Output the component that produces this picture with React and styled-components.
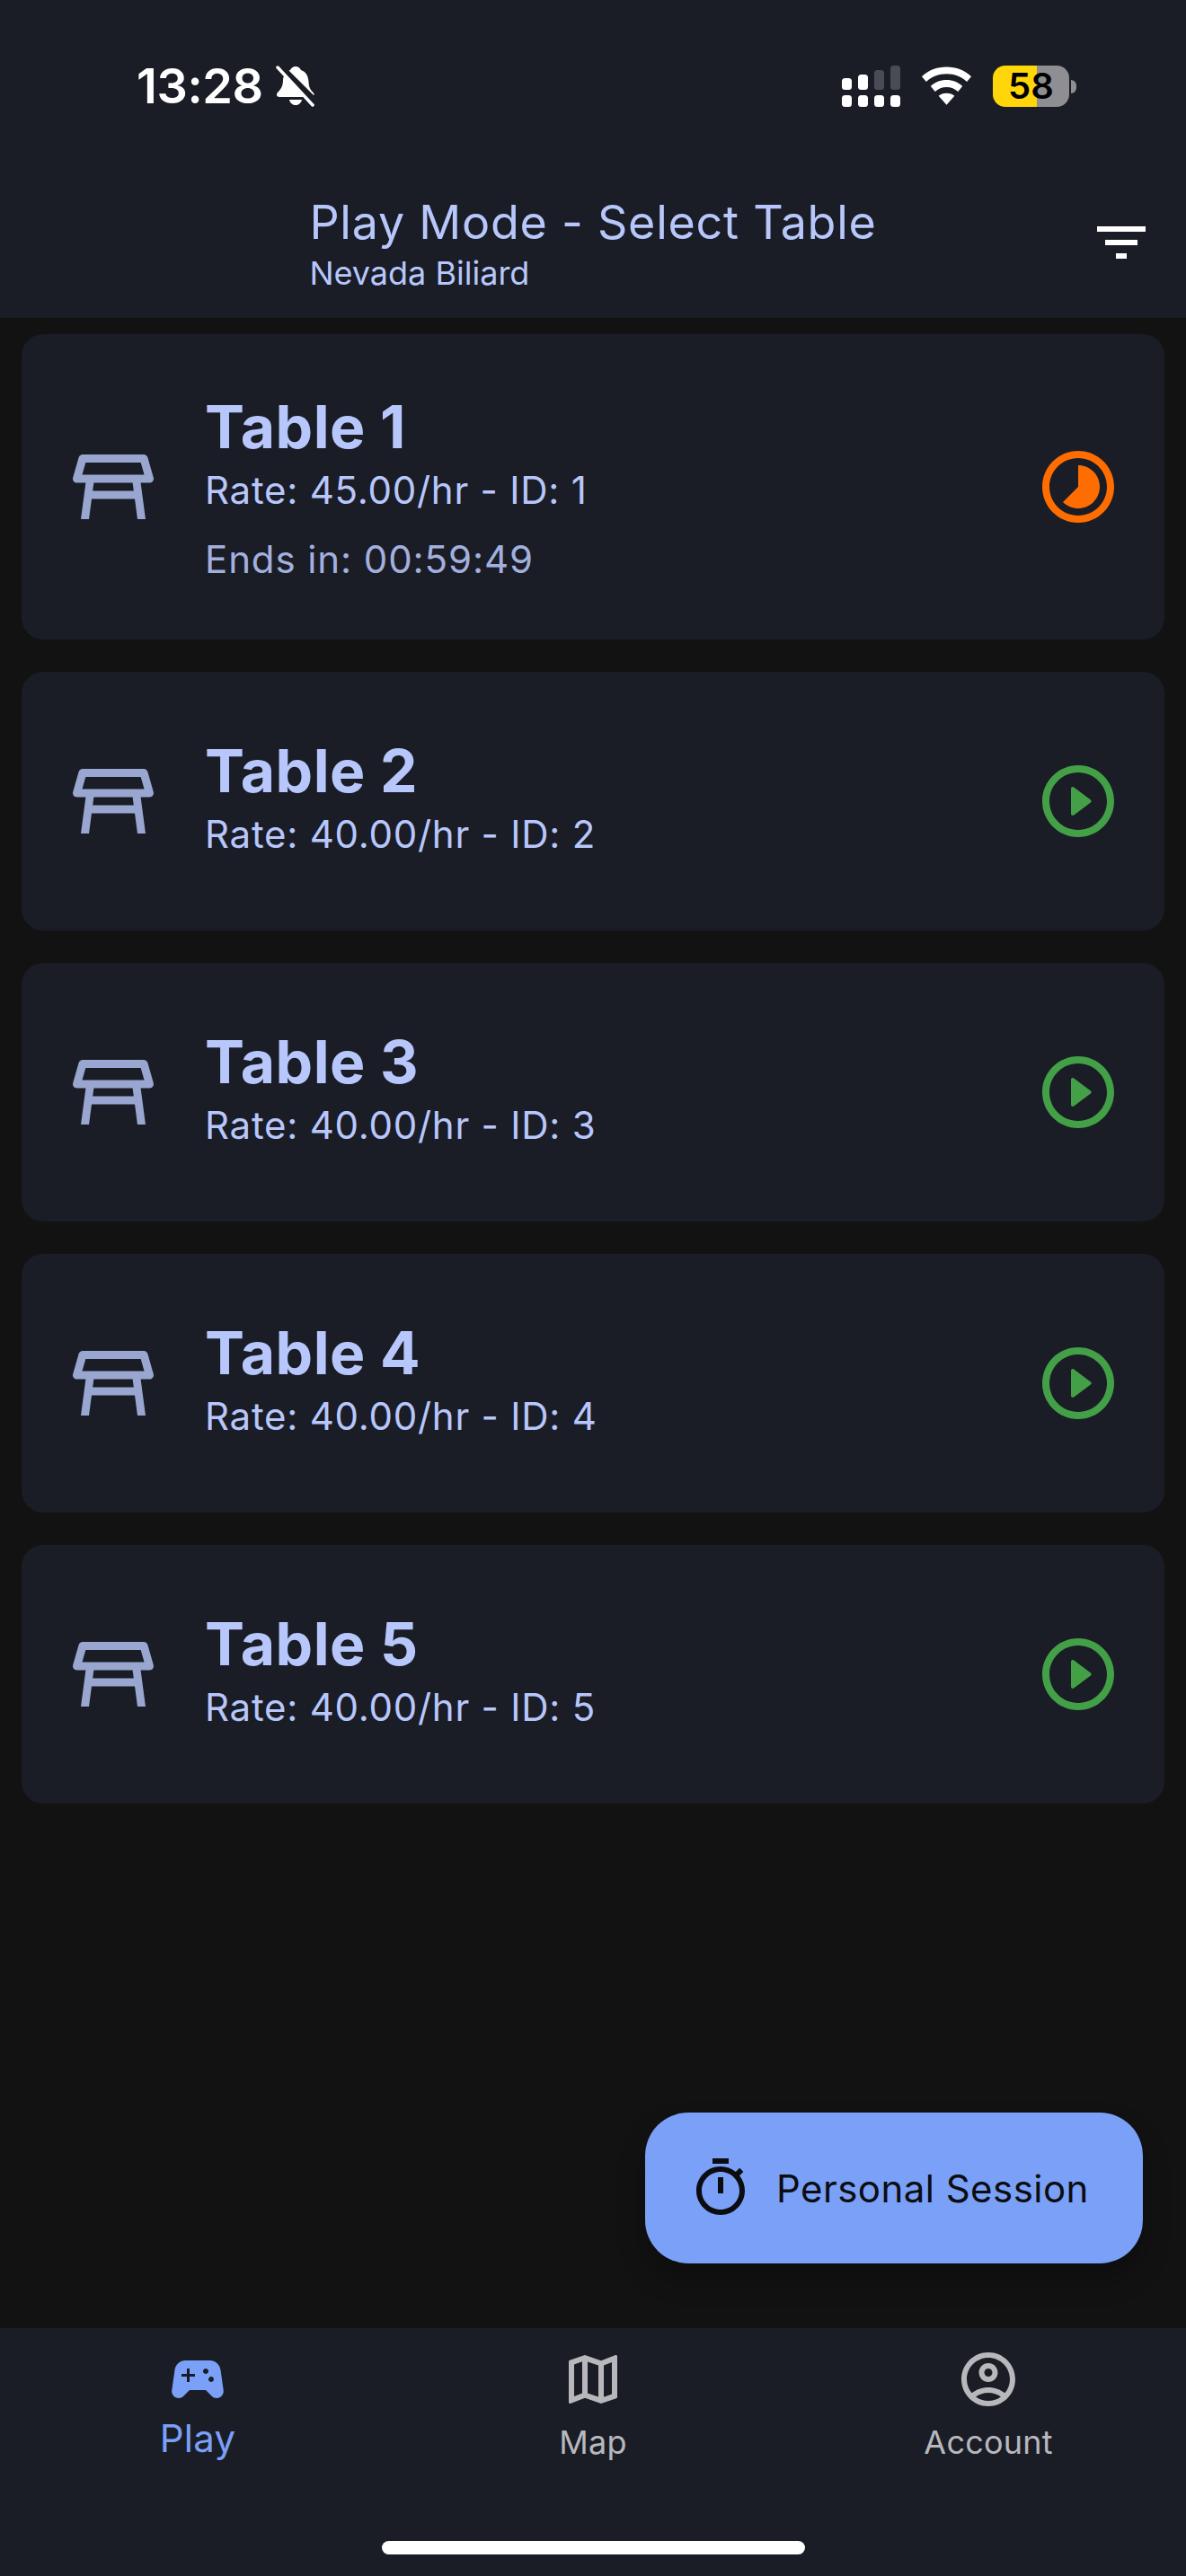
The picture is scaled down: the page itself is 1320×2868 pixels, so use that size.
import React from 'react';
import styled, { createGlobalStyle } from 'styled-components';

const Global = createGlobalStyle`
  html, body { margin: 0; padding: 0; background: #121212; }
  * { box-sizing: border-box; }
`;
const Page = styled.div`
  width: 1320px; height: 2868px; display: flex; flex-direction: column;
  background: #121212; font-family: Inter, "Liberation Sans", sans-serif; overflow: hidden;
`;
const Header = styled.header`
  height: 354px; background: #1a1d26; flex: none; display: flex; flex-direction: column;
`;
const StatusBar = styled.div`
  height: 196px; padding: 73px 122px 0 152px; display: flex; justify-content: space-between; align-items: flex-start;
`;
const TimeGroup = styled.div`
  display: flex; align-items: center; gap: 14px; height: 46px;
`;
const Clock = styled.span`
  color: #fff; font-size: 54px; font-weight: 600; line-height: 46px; letter-spacing: -0.4px;
`;
const StatusIcons = styled.div`
  display: flex; align-items: center; gap: 23px; height: 46px;
`;
const Battery = styled.div`
  width: 85px; height: 46px; border-radius: 14px;
  background: linear-gradient(to right, #ffd60a 0, #ffd60a 49px, #8e8e93 49px);
  display: flex; align-items: center; justify-content: center;
  color: #000; font-size: 40px; font-weight: 600; line-height: 46px;
`;
const BatteryWrap = styled.div`
  display: flex; align-items: center; gap: 2px;
`;
const BatteryNub = styled.div`
  width: 6px; height: 15px; background: #8e8e93; border-radius: 0 7px 7px 0;
`;
const Toolbar = styled.div`
  flex: 1; display: grid; grid-template-columns: 1fr auto 1fr; align-items: start;
`;
const TitleBlock = styled.div`
  grid-column: 2; display: flex; flex-direction: column; margin-top: 17px;
`;
const Title = styled.div`
  color: #b8c7fb; font-size: 52px; line-height: 70px; font-weight: 400; letter-spacing: 0.75px;
`;
const Subtitle = styled.div`
  color: #b8c7fb; font-size: 36px; line-height: 44px; font-weight: 400; margin-top: -1px;
`;
const FilterButton = styled.div`
  grid-column: 3; justify-self: end; display: flex; flex-direction: column; align-items: center; gap: 9px;
  margin: 56px 45px 0 0; width: 54px;
`;
const FilterBar = styled.div`
  height: 6px; background: #fff; width: ${p => p.$w}px;
`;
const Body = styled.main`
  position: relative; flex: 1; padding: 18px 24px 0; display: flex; flex-direction: column; gap: 36px;
`;
const Card = styled.div`
  min-height: 288px; padding: 62.5px 48px; background: #1a1d26; border-radius: 24px;
  display: flex; align-items: center;
`;
const CardText = styled.div`
  flex: 1; display: flex; flex-direction: column; margin-left: 48px; padding-bottom: ${p => p.$compact ? 8 : 0}px;
`;
const CardTitle = styled.div`
  color: #b8c7fb; font-size: 66px; line-height: 80px; font-weight: 700; letter-spacing: 0.5px;
`;
const Rate = styled.div`
  color: #b8c7fb; font-size: 42px; line-height: 61px; letter-spacing: 0.75px;
`;
const Ends = styled.div`
  color: #a3b0de; font-size: 42px; line-height: 54px; margin-top: 20px; letter-spacing: 0.9px;
`;
const Fab = styled.div`
  position: absolute; left: 718px; top: 1998px; width: 554px; height: 168px; border-radius: 48px;
  background: #7aa0f7; box-shadow: 0 18px 30px rgba(0,0,0,.25); padding: 0 48px;
  display: flex; align-items: center; gap: 26px; color: #0c0d10; font-size: 42px; letter-spacing: 0.45px;
`;
const Nav = styled.nav`
  position: relative; height: 276px; flex: none; background: #1a1d26; display: grid; grid-template-columns: repeat(3, 1fr);
`;
const NavItem = styled.div`
  display: flex; flex-direction: column; align-items: center; padding-top: 21px;
  color: ${p => p.$active ? '#7aa0f7' : '#b8b8bc'};
`;
const NavLabel = styled.div`
  font-size: ${p => p.$active ? 42 : 36}px; line-height: ${p => p.$active ? 50 : 44}px;
  letter-spacing: ${p => p.$active ? 0.25 : 0.2}px;
  margin-top: ${p => p.$active ? 5 : 12}px;
`;
const HomeBar = styled.div`
  position: absolute; left: 425px; top: 237px; width: 471px; height: 15px; border-radius: 8px; background: #fff;
`;

const Ico = ({ d, size, color }) => (
  <svg width={size} height={size} viewBox="0 0 24 24" fill={color} style={{ display: 'block', flex: 'none' }}><path d={d} /></svg>
);
const TABLE = 'M21.96 9.73l-1.43-5C20.41 4.3 20.02 4 19.57 4H4.43C3.98 4 3.59 4.3 3.47 4.73l-1.43 5C1.86 10.36 2.34 11 3 11h2.2L4 20h2l.67-5h10.67L18 20h2l-1.2-9H21c.66 0 1.14-.64.96-1.27zM6.93 13l.27-2h9.6l.27 2H6.93zM4.33 9l.86-3h13.63l.86 3H4.33z';
const TIMELAPSE = 'M16.24 7.76C15.07 6.59 13.54 6 12 6v6l-4.24 4.24c2.34 2.34 6.14 2.34 8.49 0 2.34-2.34 2.34-6.14-.01-8.48zM12 2C6.47 2 2 6.47 2 12s4.47 10 10 10 10-4.47 10-10S17.53 2 12 2zm0 18c-4.42 0-8-3.58-8-8s3.58-8 8-8 8 3.58 8 8-3.58 8-8 8z';
const PLAY = 'M10.8 15.9l4.67-3.5c.27-.2.27-.6 0-.8L10.8 8.1c-.33-.25-.8-.01-.8.4v7c0 .41.47.65.8.4zM12 2C6.48 2 2 6.48 2 12s4.48 10 10 10 10-4.48 10-10S17.52 2 12 2zm0 18c-4.41 0-8-3.59-8-8s3.59-8 8-8 8 3.59 8 8-3.59 8-8 8z';
const TIMER = 'M15 1H9v2h6V1zm-4 13h2V8h-2v6zm8.03-6.61l1.42-1.42c-.43-.51-.9-.99-1.41-1.41l-1.42 1.42C16.07 4.74 14.12 4 12 4c-4.97 0-9 4.03-9 9s4.02 9 9 9 9-4.03 9-9c0-2.12-.74-4.07-1.97-5.61zM12 20c-3.87 0-7-3.13-7-7s3.13-7 7-7 7 3.13 7 7-3.13 7-7 7z';
const GAME = 'M21.58 16.09l-1.09-7.66C20.21 6.46 18.52 5 16.53 5H7.47C5.48 5 3.79 6.46 3.51 8.43l-1.09 7.66C2.2 17.63 3.39 19 4.94 19c.68 0 1.32-.27 1.8-.75L9 16h6l2.25 2.25c.48.48 1.13.75 1.8.75 1.56 0 2.75-1.37 2.53-2.91zM11 11H9v2H8v-2H6v-1h2V8h1v2h2v1zm4-1c-.55 0-1-.45-1-1s.45-1 1-1 1 .45 1 1-.45 1-1 1zm2 3c-.55 0-1-.45-1-1s.45-1 1-1 1 .45 1 1-.45 1-1 1z';
const MAP = 'M20.5 3l-.16.03L15 5.1 9 3 3.36 4.9c-.21.07-.36.25-.36.48V20.5c0 .28.22.5.5.5l.16-.03L9 18.9l6 2.1 5.64-1.9c.21-.07.36-.25.36-.48V3.5c0-.28-.22-.5-.5-.5zM10 5.47l4 1.4v11.66l-4-1.4V5.47zm-5 .99l3-1.01v11.7l-3 1.16V6.46zm14 11.08l-3 1.01V6.86l3-1.16v11.84z';
const ACCOUNT = 'M12 2C6.48 2 2 6.48 2 12s4.48 10 10 10 10-4.48 10-10S17.52 2 12 2zM7.35 18.5C8.66 17.56 10.26 17 12 17s3.34.56 4.65 1.5C15.34 19.44 13.74 20 12 20s-3.34-.56-4.65-1.5zm10.79-1.38C16.45 15.8 14.32 15 12 15s-4.45.8-6.14 2.12C4.7 15.73 4 13.95 4 12c0-4.42 3.58-8 8-8s8 3.58 8 8c0 1.95-.7 3.73-1.86 5.12zM12 6c-1.93 0-3.5 1.57-3.5 3.5S10.07 13 12 13s3.5-1.57 3.5-3.5S13.93 6 12 6zm0 5c-.83 0-1.5-.67-1.5-1.5S11.17 8 12 8s1.5.67 1.5 1.5S12.83 11 12 11z';

const BellOff = () => (
  <svg width="44" height="46" viewBox="0 0 44 46" style={{ display: 'block' }}>
    <path fill="#fff" d="M22 1c3 0 5 2 6 4 6 2 8 7 8.500 13 .4 5 1 8 5 12 2 2 1 5-2 5H4c-3 0-4-3-2-5 4-4 6-8 6-13 0-6 3-10 8-12 1-2 3-4 6-4z" />
    <path fill="#fff" d="M15 38h14c-1 4-4 6-7 6s-6-2-7-6z" />
    <path stroke="#1a1d26" strokeWidth="7" d="M3 -1L45 41" />
    <path stroke="#fff" strokeWidth="3.500" strokeLinecap="round" d="M2 2L41 44" />
  </svg>
);
const Signal = () => (
  <svg width="65" height="46" viewBox="0 0 65 46" style={{ display: 'block' }}>
    <g fill="#fff">
      <rect x="0" y="14" width="11" height="13" rx="3.500" />
      <rect x="18" y="10" width="11" height="17" rx="3.500" />
      <rect x="0" y="33" width="11" height="13" rx="3.500" />
      <rect x="18" y="33" width="11" height="13" rx="3.500" />
      <rect x="36" y="33" width="11" height="13" rx="3.500" />
      <rect x="54" y="33" width="11" height="13" rx="3.500" />
    </g>
    <rect x="36" y="5" width="11" height="22" rx="3.500" fill="#4a4c55" />
    <rect x="54" y="0" width="11" height="27" rx="3.500" fill="#4a4c55" />
  </svg>
);
const Wifi = () => (
  <svg width="57" height="44" viewBox="0 0 58 44" style={{ display: 'block' }}>
    <path fill="#fff" d="M29 0c11 0 21 4 28 11l-5 6C46 11 38 8 29 8S12 11 6 17l-5-6C8 4 18 0 29 0z" />
    <path fill="#fff" d="M29 15c7 0 13 2.500 18 7l-5 6c-3.500-3-8-5-13-5s-9.500 2-13 5l-5-6c5-4.500 11-7 18-7z" />
    <path fill="#fff" d="M29 30c4 0 6.500 1 9 3L29 43l-9-10c2.500-2 5-3 9-3z" />
  </svg>
);

const tables = [
  { n: 1, rate: '45.00', ends: 'Ends in: 00:59:49' },
  { n: 2, rate: '40.00' },
  { n: 3, rate: '40.00' },
  { n: 4, rate: '40.00' },
  { n: 5, rate: '40.00' },
];

export default function App() {
  return (
    <Page>
      <Global />
      <Header>
        <StatusBar>
          <TimeGroup>
            <Clock>13:28</Clock>
            <BellOff />
          </TimeGroup>
          <StatusIcons>
            <Signal />
            <Wifi />
            <BatteryWrap>
              <Battery>58</Battery>
              <BatteryNub />
            </BatteryWrap>
          </StatusIcons>
        </StatusBar>
        <Toolbar>
          <TitleBlock>
            <Title>Play Mode - Select Table</Title>
            <Subtitle>Nevada Biliard</Subtitle>
          </TitleBlock>
          <FilterButton>
            <FilterBar $w={54} />
            <FilterBar $w={36} />
            <FilterBar $w={12} />
          </FilterButton>
        </Toolbar>
      </Header>
      <Body>
        {tables.map(t => (
          <Card key={t.n}>
            <Ico d={TABLE} size={108} color="#98a6d0" />
            <CardText $compact={!t.ends}>
              <CardTitle>Table {t.n}</CardTitle>
              <Rate>Rate: {t.rate}/hr - ID: {t.n}</Rate>
              {t.ends && <Ends>{t.ends}</Ends>}
            </CardText>
            <Ico d={t.ends ? TIMELAPSE : PLAY} size={96} color={t.ends ? '#ff6d00' : '#43a047'} />
          </Card>
        ))}
        <Fab>
          <Ico d={TIMER} size={72} color="#0c0d10" />
          Personal Session
        </Fab>
      </Body>
      <Nav>
        <NavItem $active>
          <Ico d={GAME} size={72} color="#7aa0f7" />
          <NavLabel $active>Play</NavLabel>
        </NavItem>
        <NavItem>
          <Ico d={MAP} size={72} color="#b8b8bc" />
          <NavLabel>Map</NavLabel>
        </NavItem>
        <NavItem>
          <Ico d={ACCOUNT} size={72} color="#b8b8bc" />
          <NavLabel>Account</NavLabel>
        </NavItem>
        <HomeBar />
      </Nav>
    </Page>
  );
}
